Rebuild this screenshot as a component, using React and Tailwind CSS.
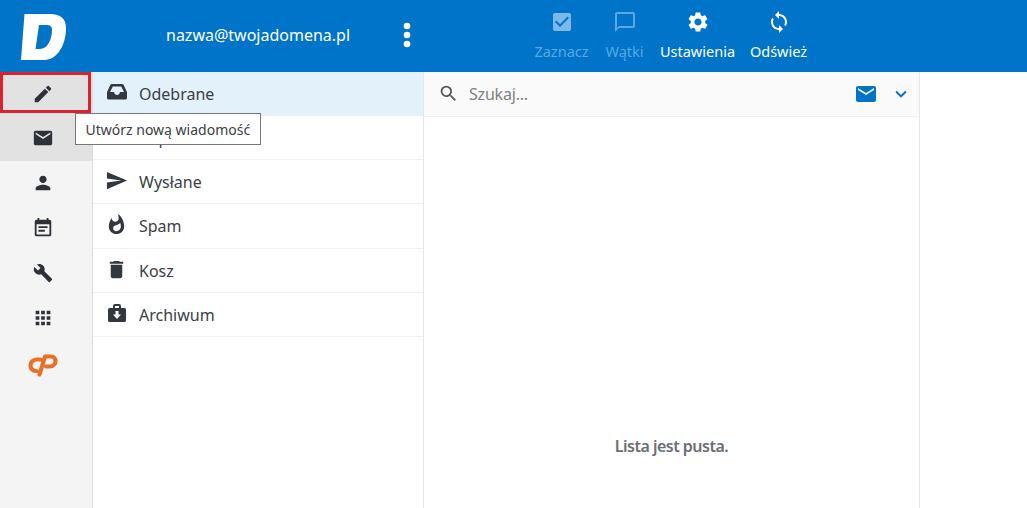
import { MdEdit, MdEmail, MdPerson, MdEventNote, MdBuild, MdApps, MdSend, MdWhatshot, MdDelete, MdSearch, MdExpandMore, MdCheckBox, MdChatBubbleOutline, MdSettings, MdSync } from 'react-icons/md'

function Logo() {
  return (
    <svg width="46" height="46" viewBox="0 0 46 46" className="block">
      <path
        fill="#fff"
        fillRule="evenodd"
        d="M4.500 0H30c11 0 16 5 16 14 0 16-8 32-22 32H1L4.500 0Zm14.500 11-3.500 24H20c7 0 12-9 12-19 0-4-2-5-6-5h-7Z"
      />
    </svg>
  )
}

function CpanelLogo() {
  return (
    <svg width="30" height="24" viewBox="0 0 30 24" className="block">
      <path
        fill="none"
        stroke="#e8702a"
        strokeWidth="4.200"
        strokeLinecap="round"
        strokeLinejoin="round"
        d="M12.500 6.500H9C5.500 6.500 2.500 9 2.500 12.500S5 18 8.500 18M11.500 21.500 17 3.500h6c3 0 4.500 2 4.500 4.500s-2 5.500-5.500 5.500h-4"
      />
    </svg>
  )
}

function InboxTray() {
  return (
    <svg width="24" height="24" viewBox="0 0 24 24" className="block">
      <path
        fill="currentColor"
        fillRule="evenodd"
        d="M7 4h10c.8 0 1.300.4 1.700 1l3 6.500c.2.400.3.800.3 1.200V18c0 .8-.7 1.500-1.500 1.500h-17C2.700 19.500 2 18.800 2 18v-5.300c0-.4.100-.8.300-1.200l3-6.500C5.700 4.400 6.200 4 7 4Zm.8 2.500L5 12h4c.3 1.700 1.500 3 3 3s2.700-1.300 3-3h4l-2.800-5.500H7.800Z"
      />
    </svg>
  )
}

function ArchiveCase() {
  return (
    <svg width="24" height="24" viewBox="0 0 24 24" className="block">
      <path
        fill="currentColor"
        fillRule="evenodd"
        d="M10 3h4a2 2 0 0 1 2 2v2h3.500A1.500 1.500 0 0 1 21 8.500v11a1.500 1.500 0 0 1-1.500 1.500h-15A1.500 1.500 0 0 1 3 19.500v-11A1.500 1.500 0 0 1 4.500 7H8V5a2 2 0 0 1 2-2Zm0 2v2h4V5h-4Zm.500 5v3.500H8l4 4.500 4-4.500h-2.500V10h-3Z"
      />
    </svg>
  )
}

function MoreDots() {
  return (
    <svg width="8" height="26" viewBox="0 0 8 26" className="block">
      <circle cx="4" cy="4" r="3.300" fill="#fff" />
      <circle cx="4" cy="13" r="3.300" fill="#fff" />
      <circle cx="4" cy="22" r="3.300" fill="#fff" />
    </svg>
  )
}

const railItems = [
  { icon: MdEdit, active: true, h: 'h-[43px]', size: 22 },
  { icon: MdEmail, active: true, h: 'h-[46px]', size: 22 },
  { icon: MdPerson, h: 'h-[45px] pb-[2px]', size: 22 },
  { icon: MdEventNote, h: 'h-[45px] pb-[2px]', size: 22 },
  { icon: MdBuild, h: 'h-[45px] pb-[2px]', size: 20 },
  { icon: MdApps, h: 'h-[45px] pb-[2px]', size: 22 },
]

const folders = [
  { name: 'Odebrane', icon: <InboxTray />, active: true, h: 'h-[44px]' },
  { name: 'Kopie robocze', icon: <MdEdit size={22} />, h: 'h-[44px]' },
  { name: 'Wysłane', icon: <MdSend size={23} />, h: 'h-[44px]' },
  { name: 'Spam', icon: <MdWhatshot size={23} />, h: 'h-[45px]' },
  { name: 'Kosz', icon: <MdDelete size={23} />, h: 'h-[44px]' },
  { name: 'Archiwum', icon: <ArchiveCase />, h: 'h-[44px]' },
]

const actions = [
  { label: 'Zaznacz', icon: <MdCheckBox size={24} className="text-[#7db8ea]" />, w: 'w-[63px]', off: true },
  { label: 'Wątki', icon: <MdChatBubbleOutline size={24} />, w: 'w-[63px]', off: true },
  { label: 'Ustawienia', icon: <MdSettings size={24} />, w: 'w-[83px]' },
  { label: 'Odśwież', icon: <MdSync size={24} />, w: 'w-[79px]' },
]

export default function App() {
  return (
    <div className="h-[508px] w-[1027px] overflow-hidden bg-white font-['Noto_Sans',sans-serif] text-[#3b4046]">
      <header className="flex h-[72px] bg-[#0074c8] text-white">
        <div className="w-[92px] pl-5 pt-[14px]">
          <Logo />
        </div>
        <div className="flex w-[330px] items-center justify-between pb-[3px] pl-[74px] pr-[11px]">
          <span className="text-[16px]">nazwa@twojadomena.pl</span>
          <MoreDots />
        </div>
        <div className="w-[108px]" />
        <div className="flex">
          {actions.map((a) => (
            <button key={a.label} className={`${a.w} flex flex-col items-center pt-[10px] ${a.off ? 'text-[#5ca6e4]' : 'text-white'}`}>
              {a.icon}
              <span className="mt-[7px] whitespace-nowrap text-[14.500px] leading-5">{a.label}</span>
            </button>
          ))}
        </div>
      </header>

      <div className="relative flex h-[436px]">
        <nav className="w-[93px] shrink-0 border-r border-[#dcdcdc] bg-[#f4f4f4]">
          {railItems.map((item, i) => {
            const Icon = item.icon
            return (
              <div key={i} className={`${item.h} flex items-center justify-center pr-[6px] text-[#2d3238] ${item.active ? 'bg-[#e2e2e2]' : ''}`}>
                <Icon size={item.size} />
              </div>
            )
          })}
          <div className="flex justify-center pr-[6px] pt-[12px]">
            <CpanelLogo />
          </div>
        </nav>

        <ul className="w-[331px] shrink-0 border-r border-[#e6e6e6]">
          {folders.map((f) => (
            <li key={f.name} className={`${f.h} flex items-center border-b border-[#f0f0f0] pl-[12px] text-[16px] ${f.active ? 'bg-[#e3f1fb]' : ''}`}>
              <span className="-mt-[3px] flex w-[34px] text-[#33383e]">{f.icon}</span>
              <span>{f.name}</span>
            </li>
          ))}
        </ul>

        <section className="flex w-[496px] shrink-0 flex-col border-r border-[#e6e6e6]">
          <div className="flex h-[45px] items-center border-b border-[#f0f0f0] bg-[#fafafa] pb-[1px] pl-[14px] pr-[7px]">
            <MdSearch size={21} className="text-[#555]" />
            <span className="ml-[10px] flex-1 text-[16px] tracking-[-0.2px] text-[#808080]">Szukaj...</span>
            <MdEmail size={24} className="text-[#0074c8]" />
            <MdExpandMore size={22} className="ml-[12px] text-[#0074c8]" />
          </div>
          <div className="flex flex-1 items-center justify-center pt-[270px]">
            <span className="pb-[4px] text-[16px] font-semibold tracking-[-0.5px] text-[#6b6f73]">Lista jest pusta.</span>
          </div>
        </section>

        <div className="absolute left-0 top-0 h-[41px] w-[91px] border-[3px] border-[#d9232e]" />
        <div className="absolute left-[75px] top-[41px] flex h-[32px] items-center border border-[#777] bg-white px-[9.500px] text-[14px] text-[#3b4046]">
          Utwórz nową wiadomość
        </div>
      </div>
    </div>
  )
}
